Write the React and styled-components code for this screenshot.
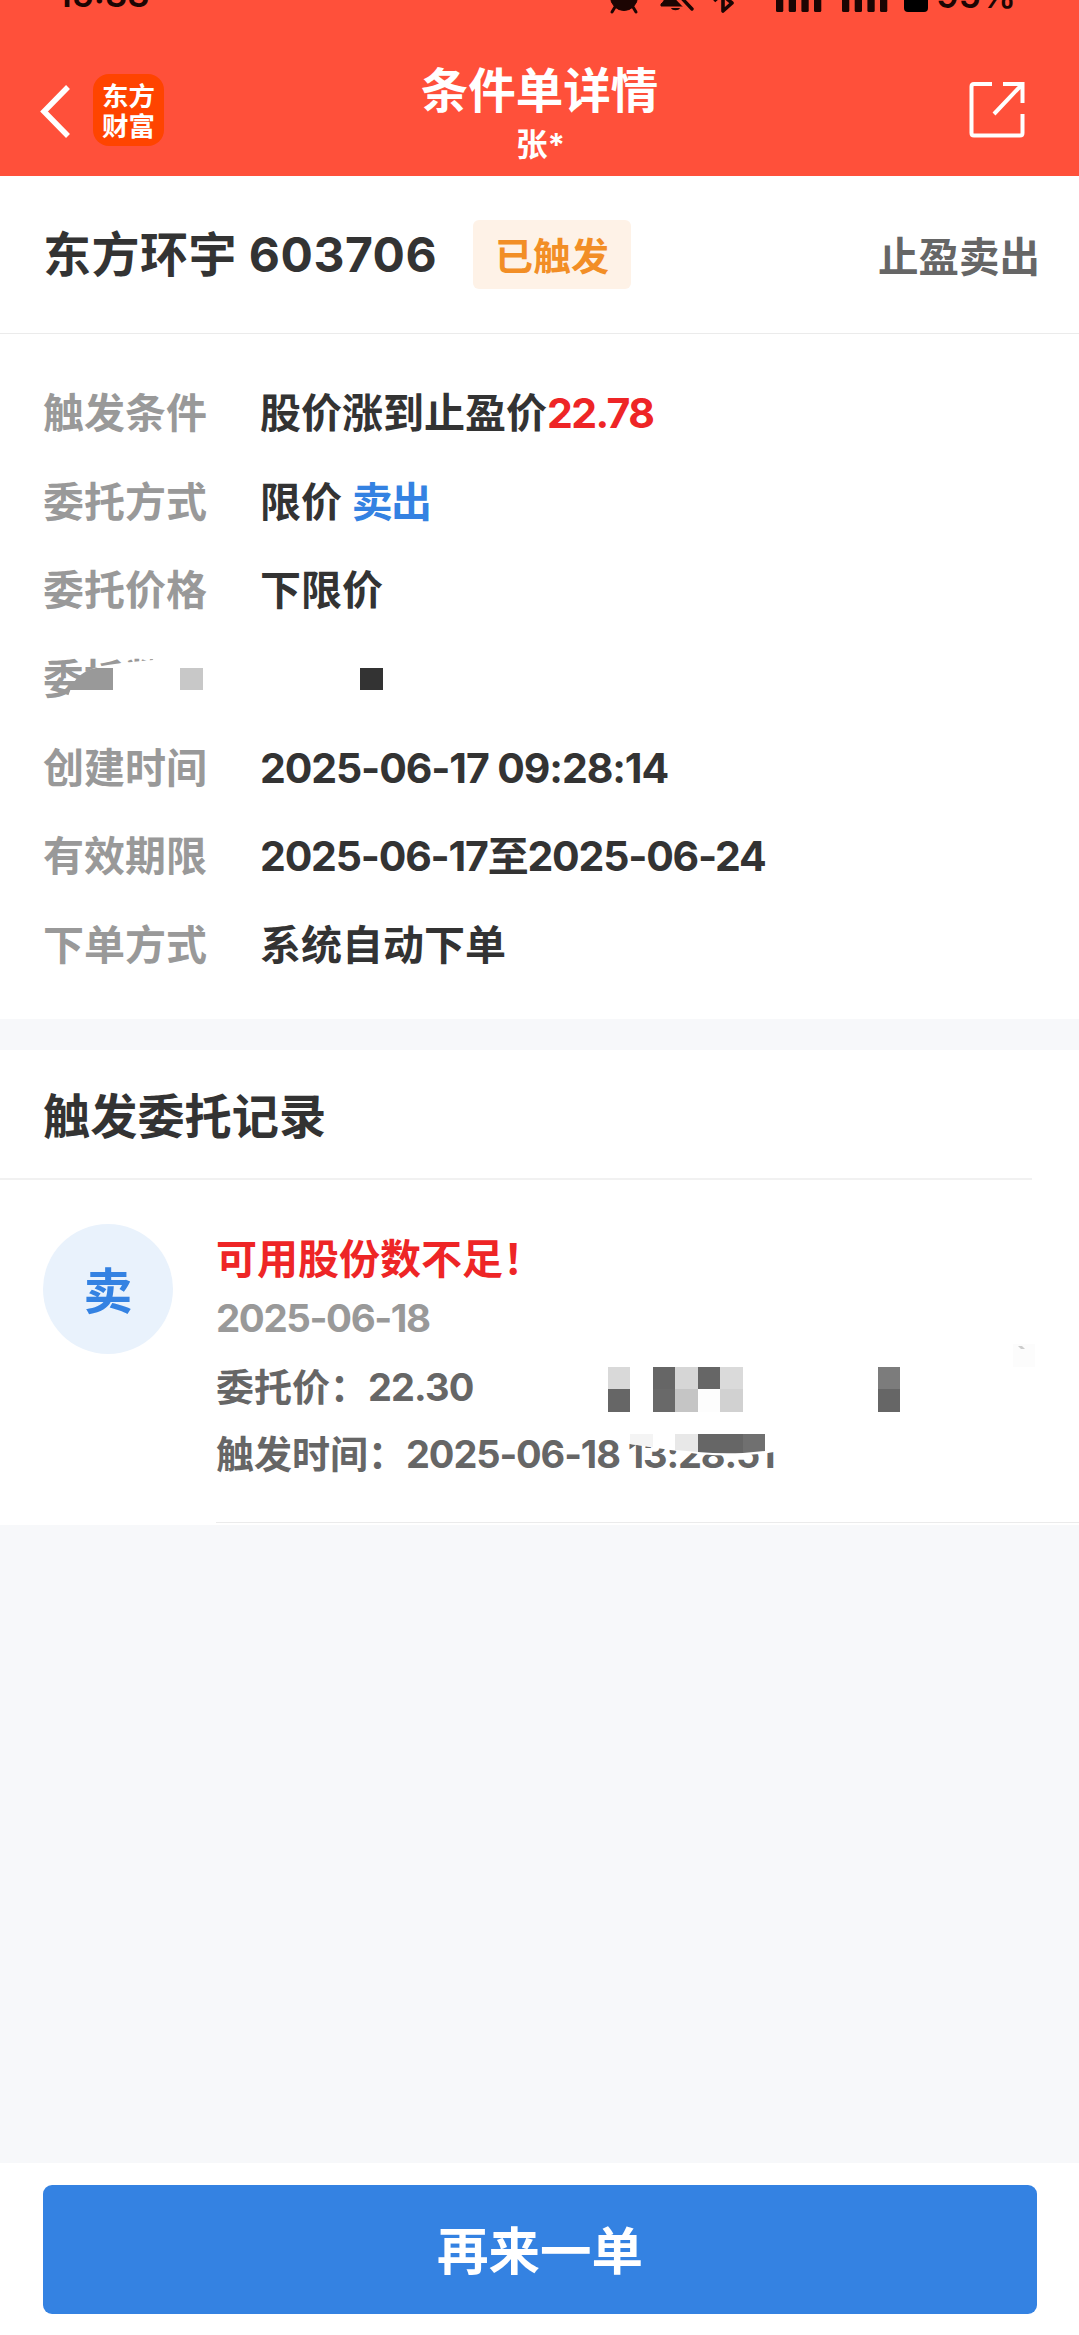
import styled, { createGlobalStyle } from "styled-components";

const GlobalStyle = createGlobalStyle`
  * {
    box-sizing: border-box;
  }

  body {
    margin: 0;
    background-color: #f7f8fa;
    font-family: Inter, "Noto Sans CJK SC", sans-serif;
    font-weight: 700;
    color: #333;
  }
`;

const Page = styled.div`
  display: flex;
  flex-direction: column;
  width: 1079px;
  height: 2335px;
  overflow: hidden;
`;

const Header = styled.header`
  height: 176px;
  background-color: #ff503a;
  color: #fff;
`;

const StatusBar = styled.div`
  display: flex;
  align-items: flex-end;
  justify-content: space-between;
  height: 20px;
  padding: 0 63px 0 57px;
  overflow: hidden;
  color: #1c0503;
  font-weight: 600;
`;

const StatusText = styled.span`
  height: ${(props) => props.$height}px;
  line-height: 36px;
  font-size: ${(props) => props.$size}px;
`;

const StatusIcons = styled.div`
  display: flex;
  align-items: flex-end;
  gap: 8px;
`;

const NavBar = styled.div`
  display: grid;
  grid-template-columns: 1fr auto 1fr;
  height: 156px;
  padding: 0 40px;
`;

const NavLeft = styled.div`
  display: flex;
  align-items: flex-start;
  gap: 22px;
  padding-top: 54px;
`;

const BackIcon = styled.svg`
  margin-top: 11px;
`;

const Logo = styled.div`
  display: flex;
  flex-direction: column;
  align-items: center;
  width: 71px;
  height: 72px;
  padding-top: 6px;
  border-radius: 16px;
  background-color: #ff4400;
  font-family: "Noto Sans CJK SC", sans-serif;
  font-size: 26.5px;
  line-height: 30px;
`;

const NavTitle = styled.div`
  padding-top: 41px;
  text-align: center;
`;

const Title = styled.h1`
  margin: 0;
  font-size: 47.5px;
  font-weight: 700;
  line-height: 60px;
`;

const SubTitle = styled.div`
  padding-left: 2px;
  font-size: 31.5px;
  line-height: 47px;
`;

const ShareIcon = styled.svg`
  justify-self: end;
  margin: 61px 14px 0 0;
`;

const StockBar = styled.section`
  display: flex;
  align-items: center;
  height: 158px;
  padding: 0 39px 0 43px;
  border-bottom: 1px solid #ebebeb;
  background-color: #fff;
`;

const StockName = styled.h2`
  width: 393px;
  margin: 0;
  padding-top: 1px;
  font-size: 48px;
  font-weight: 700;
  letter-spacing: 0.5px;
  line-height: 60px;
  white-space: nowrap;
`;

const Badge = styled.span`
  width: 158px;
  height: 69px;
  margin-left: 37px;
  border-radius: 6px;
  background-color: #fef2e7;
  color: #f28e26;
  font-size: 38px;
  line-height: 72px;
  text-align: center;
`;

const OrderType = styled.span`
  margin-left: auto;
  color: #666;
  font-size: 40.5px;
`;

const Details = styled.dl`
  height: 685px;
  margin: 0;
  padding: 35px 43px 0;
  background-color: #fff;
`;

const DetailRow = styled.div`
  position: relative;
  display: grid;
  grid-template-columns: 217px 1fr;
  height: 88.7px;
  font-size: 41px;
  line-height: 88.7px;
`;

const Label = styled.dt`
  color: #999;
`;

const Value = styled.dd`
  margin: 0;
  white-space: nowrap;
  letter-spacing: ${(props) => props.$spacing || 0}px;
`;

const Accent = styled.span`
  color: ${(props) => props.$color};
  letter-spacing: -1.6px;
`;

const Mask = styled.svg`
  position: absolute;
  left: ${(props) => props.$left}px;
  top: ${(props) => props.$top}px;
`;

const Records = styled.section`
  height: 475px;
  margin-top: 31px;
  background-color: #fff;
`;

const RecordsTitle = styled.h2`
  width: 1032px;
  height: 130px;
  margin: 0;
  padding-left: 43px;
  border-bottom: 2px solid #f1f1f1;
  font-size: 47.2px;
  font-weight: 700;
  line-height: 133px;
`;

const Record = styled.div`
  display: flex;
  gap: 43px;
  height: 344px;
  padding: 44px 0 0 43px;
`;

const SideBadge = styled.div`
  width: 130px;
  height: 130px;
  border-radius: 50%;
  background-color: #e9f2fc;
  color: #3482e2;
  font-size: 49px;
  line-height: 136px;
  text-align: center;
`;

const RecordBody = styled.div`
  position: relative;
  flex: 1;
  height: 299px;
  border-bottom: 1px solid #ebebeb;
  white-space: nowrap;
`;

const RecordLine = styled.div`
  height: ${(props) => props.$height}px;
  color: ${(props) => props.$color || "#666"};
  font-size: ${(props) => props.$size || 38}px;
  line-height: ${(props) => props.$line || props.$height}px;
`;

const Digits = styled.span`
  letter-spacing: ${(props) => props.$spacing}px;
`;

const Footer = styled.footer`
  height: 172px;
  margin-top: auto;
  padding: 22px 42px 0 43px;
  background-color: #fff;
`;

const AgainButton = styled.button`
  display: block;
  width: 100%;
  height: 129px;
  padding: 0 0 4px;
  border: 0;
  border-radius: 9px;
  background-color: #3482e2;
  color: #fff;
  font-family: inherit;
  font-size: 51.5px;
  font-weight: 700;
`;

const details = [
  { label: "触发条件", value: "股价涨到止盈价", accent: "22.78", color: "#ee2526" },
  { label: "委托方式", value: "限价 ", accent: "卖出", color: "#3482e2" },
  { label: "委托价格", value: "下限价" },
  { label: "委托数量", masked: true },
  { label: "创建时间", value: "2025-06-17 09:28:14", spacing: -1.1 },
  { label: "有效期限", value: "2025-06-17至2025-06-24", spacing: -1.2 },
  { label: "下单方式", value: "系统自动下单" },
];

const mosaic = [
  [0, 0, 22, 22, "#d9d9d9"],
  [0, 22, 22, 23, "#666"],
  [45, 0, 22, 22, "#666"],
  [45, 22, 22, 23, "#696969"],
  [67, 0, 23, 22, "#d6d6d6"],
  [67, 22, 23, 23, "#c5c5c5"],
  [90, 0, 22, 22, "#666"],
  [90, 22, 22, 23, "#fdfdfd"],
  [112, 0, 23, 22, "#dadada"],
  [112, 22, 23, 23, "#d1d1d1"],
  [270, 0, 22, 22, "#7c7c7c"],
  [270, 22, 22, 23, "#666"],
];

const signalBars = [0, 12.7, 25.4, 38, 66, 78.7, 91.4, 104];

const StatusGlyphs = () => (
  <svg width="319" height="20" viewBox="0 0 319 20">
    <g fill="#1c0503" stroke="#1c0503">
      <circle cx="15" cy="-3" r="13.5" />
      <path d="M6 7l-3 5M24 7l3 5" strokeWidth="3" strokeLinecap="round" />
      <path d="M52 4c3-2 4-5 4-9h12l11 11H52z" strokeWidth="1" />
      <path d="M62 8h9c-1 3-8 3-9 0z" strokeWidth="0" />
      <path d="M64-10L83 10" stroke="#ff503a" strokeWidth="9" />
      <path d="M68-7L83 9" strokeWidth="3.4" strokeLinecap="round" />
      <path
        d="M105 1L124-16M105-12L123 3L114 11V-16"
        fill="none"
        strokeWidth="3.6"
        strokeLinejoin="round"
      />
    </g>
    {signalBars.map((x) => (
      <rect key={x} x={167 + x} y="-10" width="7.3" height="22" rx="1.5" fill="#1c0503" />
    ))}
    <rect x="295" y="-16" width="24" height="28" rx="4" fill="#000" />
  </svg>
);

const DetailMask = () => (
  <Mask $left={0} $top={-1} width="340" height="88" viewBox="0 0 340 88">
    <path d="M23 72C27 47 40 36 59 32Q75 29 110 26L112 18H172V72Z" fill="#fff" />
    <path d="M26 56C32 44 41 36 53 34H70V56Z" fill="#999" />
    <rect x="137" y="34" width="23" height="22" fill="#c8c8c8" />
    <rect x="317" y="34" width="23" height="22" fill="#333" />
  </Mask>
);

const App = () => {
  return (
    <>
      <GlobalStyle />
      <Page>
        <Header>
          <StatusBar>
            <StatusText $size={35} $height={44}>15:33</StatusText>
            <StatusIcons>
              <StatusGlyphs />
              <StatusText $size={35} $height={43}>95%</StatusText>
            </StatusIcons>
          </StatusBar>
          <NavBar>
            <NavLeft>
              <BackIcon width="31" height="53" viewBox="0 0 31 53" fill="none" stroke="#fff" strokeWidth="5.5">
                <path d="M28 2L4 26.500L28 51" />
              </BackIcon>
              <Logo>
                <span>东方</span>
                <span>财富</span>
              </Logo>
            </NavLeft>
            <NavTitle>
              <Title>条件单详情</Title>
              <SubTitle>张*</SubTitle>
            </NavTitle>
            <ShareIcon width="56" height="57" viewBox="0 0 56 57" fill="none" stroke="#fff" strokeWidth="4">
              <path d="M23 3H5Q2.500 3 2.500 5.500V52Q2.500 54.500 5 54.500H51Q53.500 54.500 53.500 52V33" />
              <path d="M34 3H53.500V22M53 3.500L25 33" />
            </ShareIcon>
          </NavBar>
        </Header>

        <StockBar>
          <StockName>东方环宇 603706</StockName>
          <Badge>已触发</Badge>
          <OrderType>止盈卖出</OrderType>
        </StockBar>

        <Details>
          {details.map((item) => (
            <DetailRow key={item.label}>
              <Label>{item.label}</Label>
              <Value $spacing={item.spacing}>
                {item.value}
                {item.accent && <Accent $color={item.color}>{item.accent}</Accent>}
              </Value>
              {item.masked && <DetailMask />}
            </DetailRow>
          ))}
        </Details>

        <Records>
          <RecordsTitle>触发委托记录</RecordsTitle>
          <Record>
            <SideBadge>卖</SideBadge>
            <RecordBody>
              <RecordLine $height={68} $line={71} $size={41} $color="#ee2526">可用股份数不足！</RecordLine>
              <RecordLine $height={54} $line={53} $size={38.5} $color="#999">
                <Digits $spacing={-1.4}>2025-06-18</Digits>
              </RecordLine>
              <RecordLine $height={80} $line={82}>
                委托价：<Digits $spacing={-0.9}>22.30</Digits>
              </RecordLine>
              <RecordLine $height={56}>
                触发时间：<Digits $spacing={-1.1}>2025-06-18 13:28:51</Digits>
              </RecordLine>
              <Mask $left={392} $top={143} width="292" height="45">
                {mosaic.map(([x, y, width, height, fill]) => (
                  <rect key={`${x}-${y}`} x={x} y={y} width={width} height={height} fill={fill} />
                ))}
              </Mask>
              <Mask $left={414} $top={206} width="160" height="28" viewBox="0 0 160 28">
                <path d="M0 0H160V22H144Q112 28 68 24Q40 20 0 14Z" fill="#fff" />
                <path d="M0 4H23V17L0 14Z" fill="#f4f4f4" />
                <path d="M45 4H68V22L45 20Z" fill="#e8e8e8" />
                <path d="M68 4H113V23Q90 24 68 22Z" fill="#666" />
                <path d="M113 4H135V21L113 23Z" fill="#707070" />
              </Mask>
              <Mask $left={797} $top={120} width="22" height="23">
                <rect width="22" height="23" fill="#fcfcfc" />
                <path d="M5 2H9L12 5H8Z" fill="#ccc" />
              </Mask>
            </RecordBody>
          </Record>
        </Records>

        <Footer>
          <AgainButton>再来一单</AgainButton>
        </Footer>
      </Page>
    </>
  );
};

export default App;
